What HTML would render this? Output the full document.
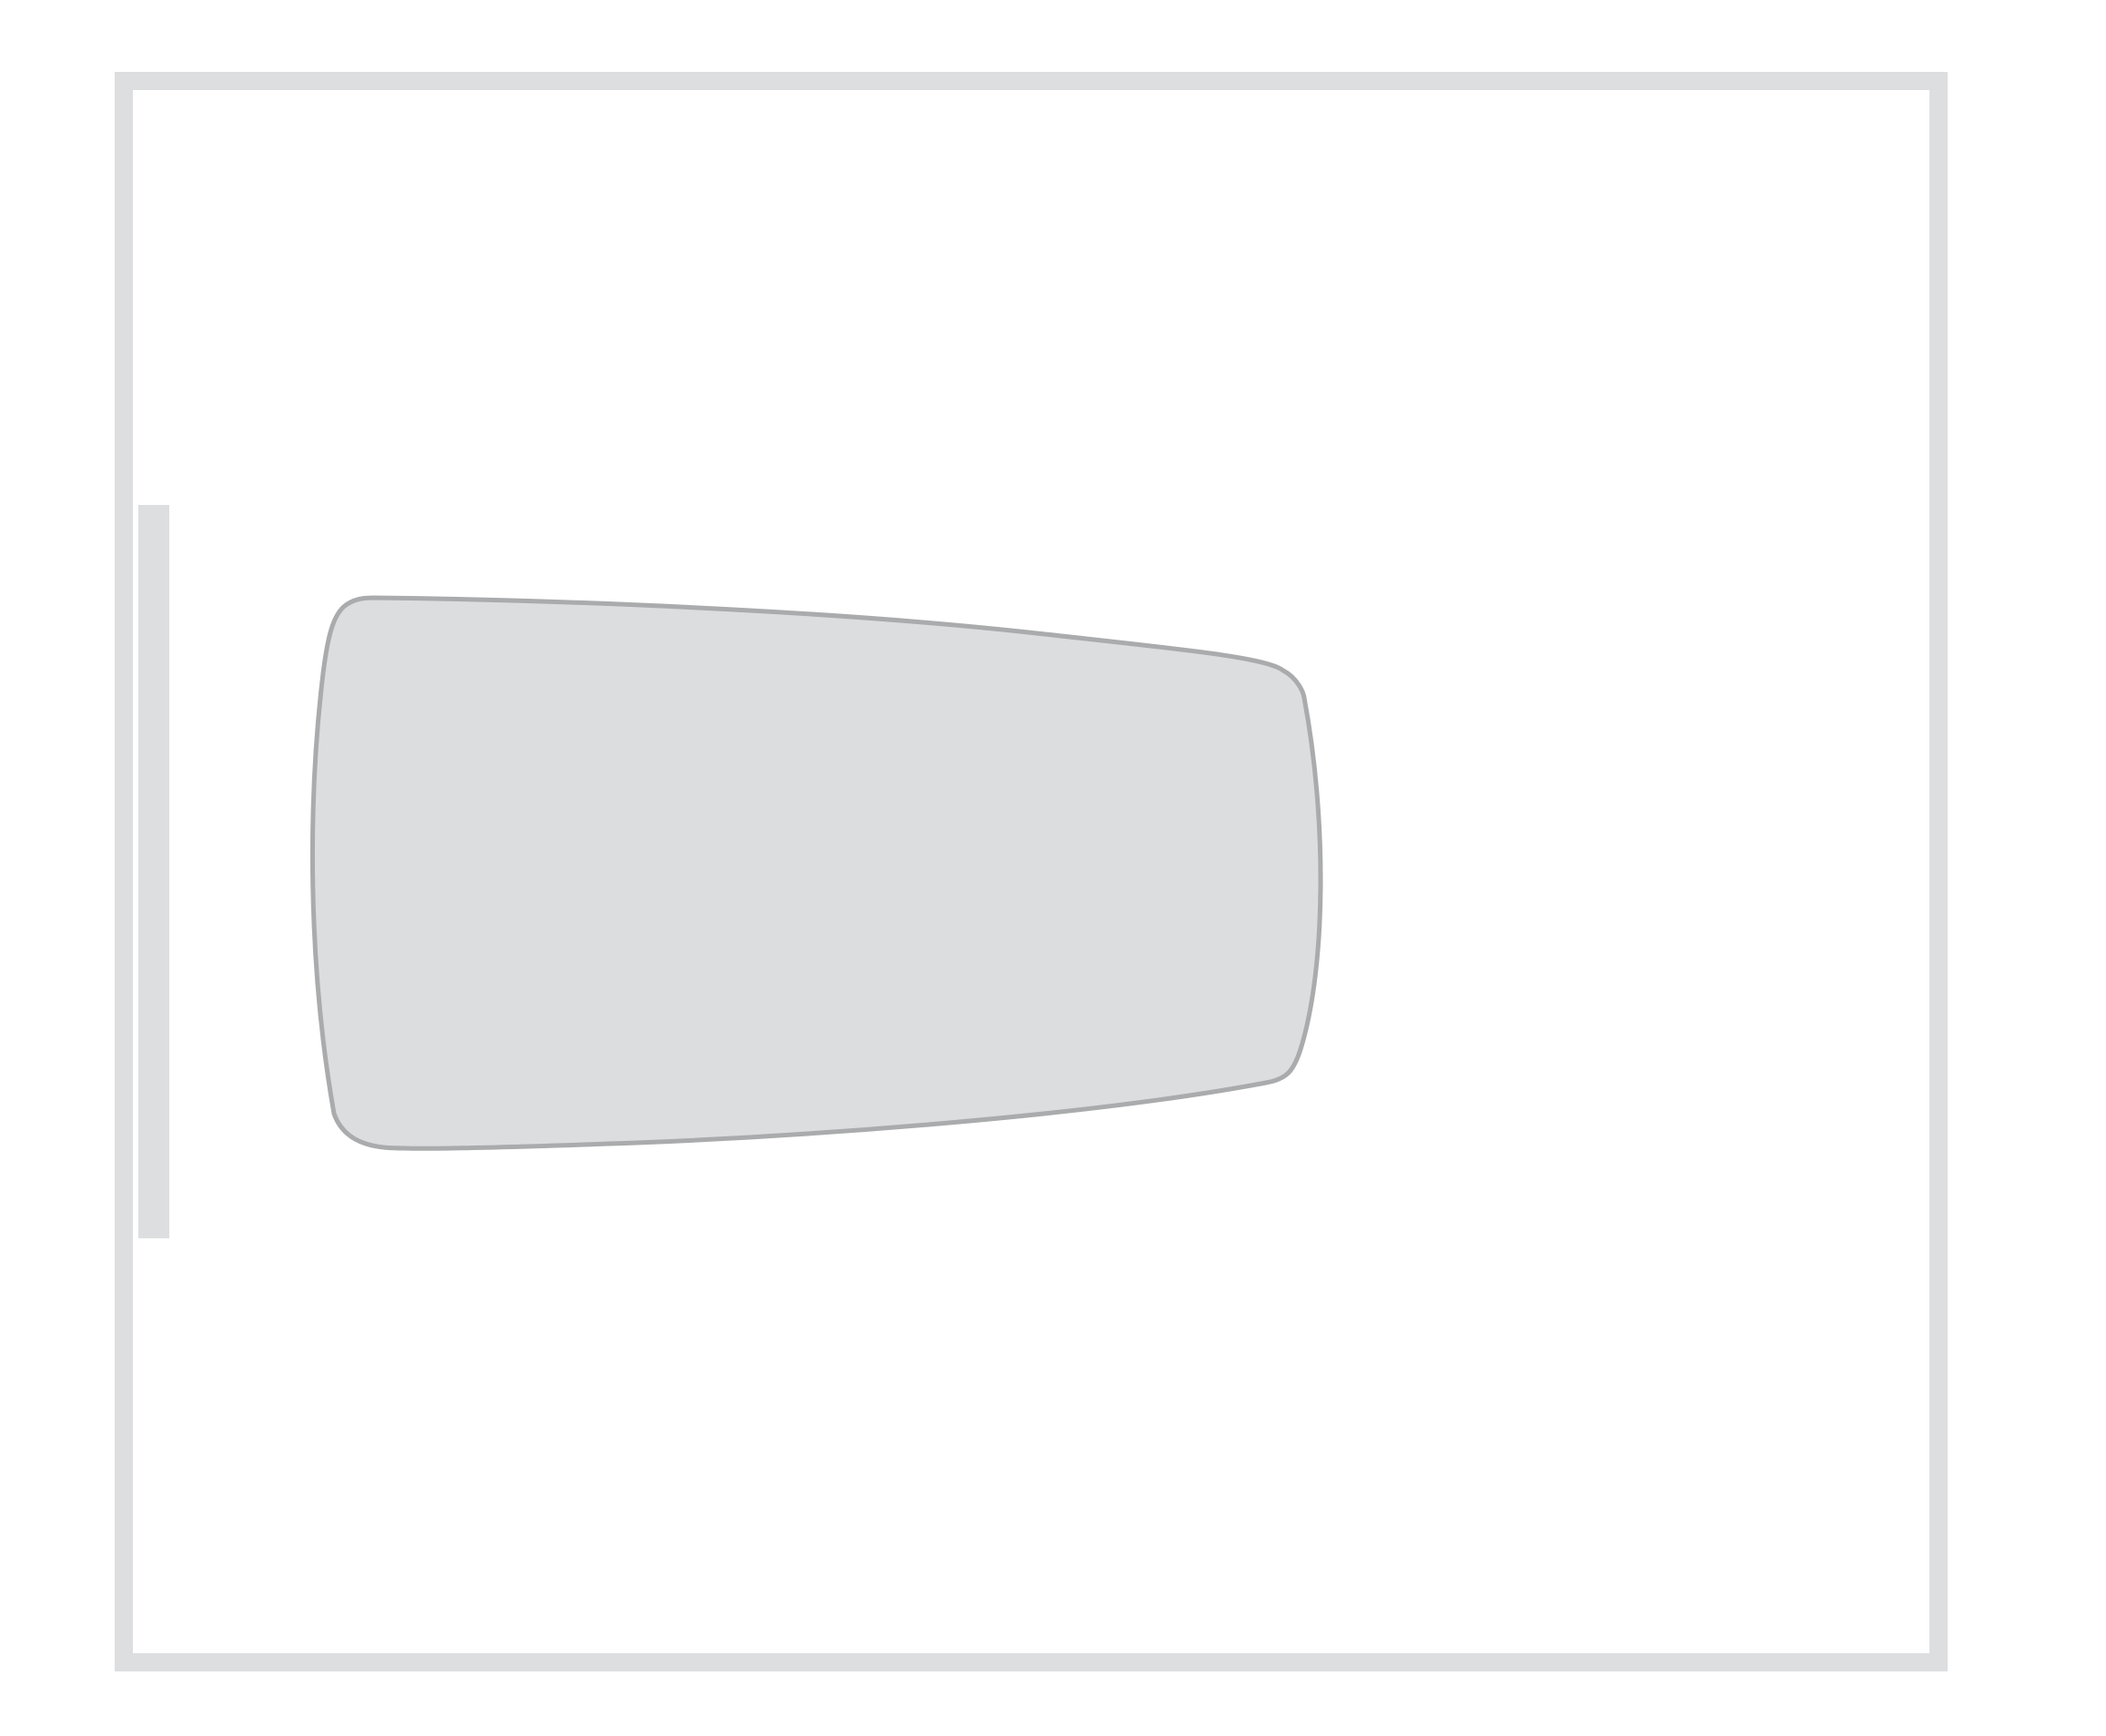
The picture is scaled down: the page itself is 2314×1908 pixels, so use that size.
<!DOCTYPE html>
<html><head><style>
html,body{margin:0;padding:0;background:#fff;width:2314px;height:1908px;overflow:hidden}
</style></head><body>
<svg width="2314" height="1908" viewBox="0 0 2314 1908" xmlns="http://www.w3.org/2000/svg">
<rect x="136" y="89" width="1994" height="1738" fill="none" stroke="#dddee0" stroke-width="20"/>
<rect x="152" y="555" width="34" height="806" fill="#dddee0"/>
<path d="M411 657 C600 659 900 670 1130 695 C1300 714 1390 722 1410 737 C1425 745 1432 760 1433 767 C1458 900 1457 1060 1430 1150 C1422 1177 1414 1186 1391 1190 C1200 1226 900 1248 700 1256 C560 1261 470 1263 444 1262 C420 1262 380 1261 367 1224 C338 1060 338 880 355 740 C360 700 366 675 380 665 C390 658 400 657 411 657 Z" fill="#dcdddf" stroke="#a9abac" stroke-width="5"/>
</svg>
</body></html>
